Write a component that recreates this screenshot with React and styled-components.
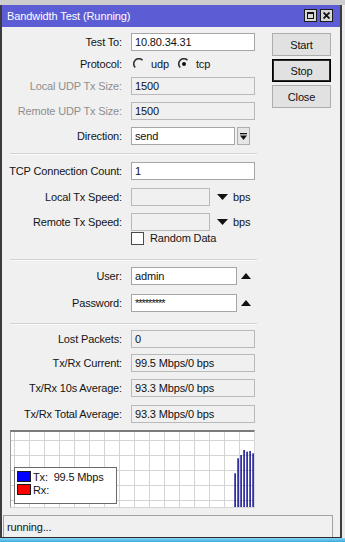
import React from 'react';
import styled, { createGlobalStyle } from 'styled-components';

const Global = createGlobalStyle`
  html, body { margin: 0; padding: 0; }
  body {
    width: 345px; height: 542px; overflow: hidden;
    background: #e6e6e6;
    font-family: "Liberation Sans", Arial, sans-serif;
  }
`;

const Desktop = styled.div`
  width: 345px; height: 542px;
  display: flex; flex-direction: column;
`;
const TopStrip = styled.div`
  height: 5px; flex: none; background: #cdcdcd;
`;
const Middle = styled.div`
  display: flex; flex: 1; min-height: 0;
`;
const RightEdge = styled.div`
  flex: 1; background: #ececec;
`;
const Taskbar = styled.div`
  height: 4px; flex: none;
  background: linear-gradient(#8ad6f2, #3aa8dc);
`;
const Window = styled.div`
  width: 342px; box-sizing: border-box;
  border-left: 2px solid #3c3c3c;
  border-right: 2px solid #3c3c3c;
  border-bottom: 1px solid #2c2c2c;
  background: #f0f0f0;
  display: flex; flex-direction: column;
`;
const TitleBar = styled.div`
  height: 22px; flex: none;
  background: #5c5cd4;
  display: flex; align-items: center;
  padding: 0 7px 0 5px;
`;
const Title = styled.div`
  color: #fff; font-size: 11px; letter-spacing: -0.1px;
  white-space: nowrap;
`;
const TitleButtons = styled.div`
  margin-left: auto; display: flex; gap: 3px; margin-top: -2px;
`;
const TitleBtn = styled.div`
  width: 13px; height: 13px; box-sizing: border-box;
  border: 1px solid #1c1c1c; background: #d8d8d8;
  display: flex; align-items: center; justify-content: center;
`;
const MaxGlyph = styled.div`
  width: 7px; height: 7px; box-sizing: border-box;
  border: 1px solid #111; border-top-width: 2px;
`;

const Body = styled.div`
  display: flex; padding-top: 6px;
`;
const FormCol = styled.div`
  width: 256px; display: flex; flex-direction: column;
`;
const ButtonCol = styled.div`
  margin-left: 14px; width: 59px;
  display: flex; flex-direction: column; gap: 3px;
`;
const Button = styled.div`
  height: 23px; box-sizing: border-box;
  border: 1px solid ${p => (p.$default ? '#000' : '#adadad')};
  box-shadow: ${p => (p.$default ? 'inset 0 0 0 1px #2a2a2a' : 'none')};
  background: #e1e1e1;
  display: flex; align-items: center; justify-content: center;
  font-size: 11px; letter-spacing: -0.15px; color: #111;
`;

const Row = styled.div`
  display: grid; grid-template-columns: 120px auto; column-gap: 9px;
  align-items: center;
  height: ${p => p.$h || 18}px;
  margin-top: ${p => p.$mt || 0}px;
`;
const Label = styled.div`
  text-align: right; white-space: nowrap;
  font-size: 11px; letter-spacing: -0.15px;
  color: ${p => (p.$disabled ? '#8e8e8e' : '#141414')};
`;
const Fields = styled.div`
  display: flex; align-items: center;
`;
const Box = styled.div`
  width: ${p => p.$w || 124}px; height: 18px; box-sizing: border-box;
  border: 1px solid ${p => (p.$edit ? '#a6a6a6' : '#b9b9b9')};
  background: ${p => (p.$edit ? '#fff' : '#f0f0f0')};
  padding-left: 3px;
  font-size: 11px; letter-spacing: ${p => (p.$mask ? '-1px' : '-0.15px')};
  line-height: 16px; color: #111; white-space: nowrap; overflow: hidden;
`;
const DropBtn = styled.div`
  width: 13px; height: 18px; box-sizing: border-box; margin-left: 2px;
  border: 1px solid #adadad; background: #e6e6e6;
  display: flex; align-items: center; justify-content: center;
`;
const Arrow = styled.svg`
  margin-left: ${p => p.$ml || 0}px; flex: none;
`;
const Unit = styled.span`
  margin-left: 5px; font-size: 11px; letter-spacing: -0.15px; color: #141414;
`;
const RadioGroup = styled.div`
  display: flex; align-items: center; padding-left: 2px;
`;
const RadioItem = styled.label`
  display: flex; align-items: center; gap: 6px;
  margin-right: 9px;
  font-size: 11px; letter-spacing: -0.15px; color: #141414;
`;
const Check = styled.div`
  width: 13px; height: 13px; box-sizing: border-box;
  border: 1px solid #4a4a4a; background: #fff;
`;
const CheckLabel = styled.label`
  display: flex; align-items: center; gap: 6px;
  font-size: 11px; letter-spacing: -0.15px; color: #141414;
`;
const Separator = styled.div`
  margin: ${p => p.$mt}px 0 0 8px; width: 247px;
  border-top: 1px solid #d3d3d3; border-bottom: 1px solid #fafafa;
`;
const Graph = styled.div`
  position: relative;
  margin: 7px 0 0 8px; width: 245px; height: 78px; box-sizing: border-box;
  border-top: 2px solid #7a7a7a; border-left: 1px solid #9a9a9a;
  border-right: 1px solid #d6d6d6; border-bottom: 1px solid #d6d6d6;
  background: #fff;
`;
const Legend = styled.div`
  position: absolute; left: 3px; top: 35px;
  width: 103px; height: 37px; box-sizing: border-box;
  border: 1px solid #6a6a6a; background: #fff;
  padding: 3px 0 0 2px;
  display: flex; flex-direction: column; gap: 2px;
`;
const LegendItem = styled.div`
  display: flex; align-items: center; gap: 2px; height: 11px;
  font-size: 11px; letter-spacing: -0.15px; color: #141414; white-space: pre;
`;
const Swatch = styled.div`
  width: 14px; height: 11px; box-sizing: border-box;
  border: 1px solid #1a1a1a; background: ${p => p.$c};
`;
const Status = styled.div`
  margin: 7px 7px 0 1px; height: 22px; box-sizing: border-box;
  border-top: 1px solid #a3a3a3; border-left: 1px solid #a3a3a3;
  border-right: 1px solid #a3a3a3;
  padding-left: 3px;
  display: flex; align-items: center;
  font-size: 11px; letter-spacing: -0.15px; color: #141414;
`;

const Radio = ({ on }) => (
  <svg width="12" height="12" viewBox="0 0 12 12">
    <path d="M9.5 2.2 A5 5 0 1 0 2.2 9.5" fill="none" stroke="#303030" strokeWidth="1.6" />
    {on && <circle cx="6" cy="6" r="2" fill="#111" />}
  </svg>
);

const Down = ({ ml }) => (
  <Arrow $ml={ml} width="11" height="6" viewBox="0 0 11 6">
    <path d="M0 0 H11 L5.5 6 Z" fill="#111" />
  </Arrow>
);
const Up = ({ ml }) => (
  <Arrow $ml={ml} width="10" height="6" viewBox="0 0 10 6">
    <path d="M0 6 H10 L5 0 Z" fill="#111" />
  </Arrow>
);

const bars = [
  [223.3, 41.3], [226.3, 26.3], [229.3, 23], [232.3, 18],
  [235.3, 19.7], [238.3, 19], [241.3, 21.3],
];

const GraphArt = () => {
  const v = [];
  for (let x = 3.5; x < 243; x += 15) v.push(x);
  const h = [8.5, 23.5, 38.5, 53.5, 68.5];
  return (
    <svg width="243" height="75" viewBox="0 0 243 75" style={{ display: 'block' }}>
      {v.map(x => <line key={'v' + x} x1={x} y1="0" x2={x} y2="75" stroke="#d4d4d4" strokeWidth="1" />)}
      {h.map(y => <line key={'h' + y} x1="0" y1={y} x2="243" y2={y} stroke="#d4d4d4" strokeWidth="1" />)}
      {bars.map(([x, t]) => <rect key={x} x={x} y={t} width="1.6" height={75 - t} fill="#1c1c98" />)}
    </svg>
  );
};

export default function App() {
  return (
    <Desktop>
      <Global />
      <TopStrip />
      <Middle>
        <Window>
          <TitleBar>
            <Title>Bandwidth Test (Running)</Title>
            <TitleButtons>
              <TitleBtn><MaxGlyph /></TitleBtn>
              <TitleBtn>
                <svg width="7" height="7" viewBox="0 0 7 7">
                  <path d="M0.5 0.5 L6.5 6.5 M6.5 0.5 L0.5 6.5" stroke="#111" strokeWidth="1.8" />
                </svg>
              </TitleBtn>
            </TitleButtons>
          </TitleBar>
          <Body>
            <FormCol>
              <Row>
                <Label>Test To:</Label>
                <Fields><Box $edit>10.80.34.31</Box></Fields>
              </Row>
              <Row $mt={4}>
                <Label>Protocol:</Label>
                <RadioGroup>
                  <RadioItem><Radio />udp</RadioItem>
                  <RadioItem><Radio on />tcp</RadioItem>
                </RadioGroup>
              </Row>
              <Row $mt={4}>
                <Label $disabled>Local UDP Tx Size:</Label>
                <Fields><Box>1500</Box></Fields>
              </Row>
              <Row $mt={7}>
                <Label $disabled>Remote UDP Tx Size:</Label>
                <Fields><Box>1500</Box></Fields>
              </Row>
              <Row $mt={7}>
                <Label>Direction:</Label>
                <Fields>
                  <Box $edit $w={104}>send</Box>
                  <DropBtn>
                    <svg width="7" height="7" viewBox="0 0 7 7">
                      <rect x="0" y="0" width="7" height="1.3" fill="#111" />
                      <path d="M0 2.5 H7 L3.5 7 Z" fill="#111" />
                    </svg>
                  </DropBtn>
                </Fields>
              </Row>
              <Separator $mt={8} />
              <Row $mt={7}>
                <Label>TCP Connection Count:</Label>
                <Fields><Box $edit>1</Box></Fields>
              </Row>
              <Row $mt={8}>
                <Label>Local Tx Speed:</Label>
                <Fields><Box $w={79} /><Down ml={7} /><Unit>bps</Unit></Fields>
              </Row>
              <Row $mt={7}>
                <Label>Remote Tx Speed:</Label>
                <Fields><Box $w={79} /><Down ml={7} /><Unit>bps</Unit></Fields>
              </Row>
              <Row $h={14}>
                <span />
                <CheckLabel><Check />Random Data</CheckLabel>
              </Row>
              <Separator $mt={14} />
              <Row $mt={6}>
                <Label>User:</Label>
                <Fields><Box $edit $w={106}>admin</Box><Up ml={4} /></Fields>
              </Row>
              <Row $mt={9}>
                <Label>Password:</Label>
                <Fields><Box $edit $mask $w={106}>*********</Box><Up ml={4} /></Fields>
              </Row>
              <Separator $mt={11} />
              <Row $mt={5}>
                <Label>Lost Packets:</Label>
                <Fields><Box>0</Box></Fields>
              </Row>
              <Row $mt={6}>
                <Label>Tx/Rx Current:</Label>
                <Fields><Box>99.5 Mbps/0 bps</Box></Fields>
              </Row>
              <Row $mt={7}>
                <Label>Tx/Rx 10s Average:</Label>
                <Fields><Box>93.3 Mbps/0 bps</Box></Fields>
              </Row>
              <Row $mt={8}>
                <Label>Tx/Rx Total Average:</Label>
                <Fields><Box>93.3 Mbps/0 bps</Box></Fields>
              </Row>
              <Graph>
                <GraphArt />
                <Legend>
                  <LegendItem><Swatch $c="#0000ff" />Tx:  99.5 Mbps</LegendItem>
                  <LegendItem><Swatch $c="#ff0000" />Rx:</LegendItem>
                </Legend>
              </Graph>
            </FormCol>
            <ButtonCol>
              <Button>Start</Button>
              <Button $default>Stop</Button>
              <Button>Close</Button>
            </ButtonCol>
          </Body>
          <Status>running...</Status>
        </Window>
        <RightEdge />
      </Middle>
      <Taskbar />
    </Desktop>
  );
}
